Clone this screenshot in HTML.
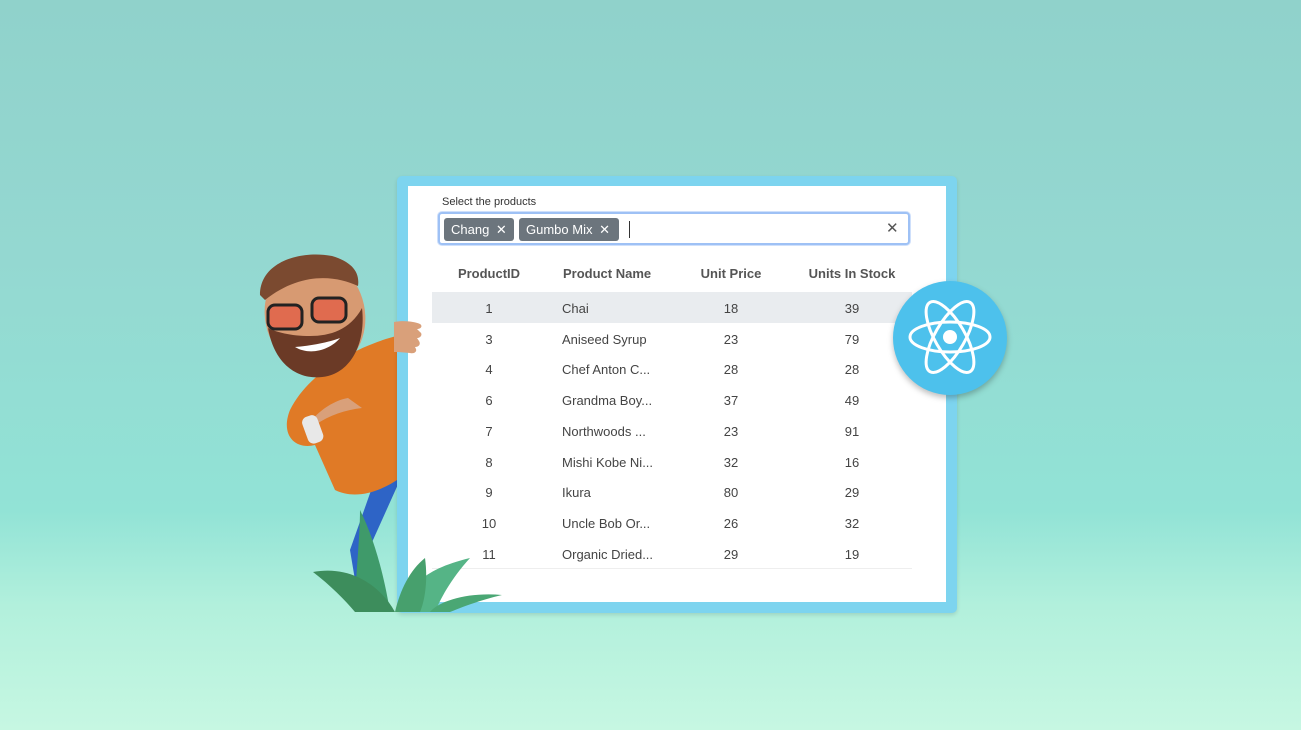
<!DOCTYPE html>
<html><head><style>
*{margin:0;padding:0;box-sizing:border-box}
body{width:1301px;height:730px;overflow:hidden;position:relative;font-family:"Liberation Sans",sans-serif;
background:linear-gradient(180deg,#90d2cb 0%,#94d8d1 35%,#92e3d6 70%,#b2f0dc 83%,#c6f7e2 100%)}
.abs{position:absolute}
.frame{left:397px;top:176px;width:560px;height:437px;background:#7dd4ef;border-radius:5px;box-shadow:0 2px 4px rgba(0,0,0,.12)}
.inner{left:408px;top:186px;width:538px;height:416px;background:#fff}
.lbl{left:442px;top:196px;font-size:11px;color:#333}
.inp{left:438px;top:212px;width:472px;height:33px;border:2px solid #9ec1f5;border-radius:4px;background:#fff;box-shadow:0 0 0 1px #cfe0fb}
.chip{top:4px;height:23px;background:#6c757d;color:#fff;font-size:13px;border-radius:3px;line-height:23px;padding-left:7px}
.t{font-size:13px;color:#444;position:absolute;transform:translateX(-50%)}
.h{font-weight:bold;color:#555}
.l{transform:none}
</style></head><body>
<svg class="abs" style="left:240px;top:250px" width="180" height="330">
<path d="M115 330 L160 230 L160 215 L140 215 L110 300 Z" fill="#2e64c6"/>
<path d="M160 85 C120 95 70 120 50 160 C40 185 55 200 75 195 L95 240 C115 250 140 242 160 228 Z" fill="#e07a26"/>
<ellipse cx="75" cy="65" rx="50" ry="58" fill="#d79a72" transform="rotate(-12 75 65)"/>
<path d="M28 78 C35 118 62 132 88 126 C112 120 126 92 122 58 C110 80 90 86 70 86 C50 86 36 82 28 78Z" fill="#6b3a26"/>
<path d="M20 45 C20 12 60 0 92 6 C112 12 120 22 118 36 C95 25 60 22 25 50Z" fill="#7b4a30"/>
<rect x="28" y="55" width="34" height="24" rx="7" fill="#e06b4f" stroke="#222" stroke-width="3"/>
<rect x="72" y="48" width="34" height="24" rx="7" fill="#e06b4f" stroke="#222" stroke-width="3"/>
<path d="M55 97 C70 106 90 100 100 88 C90 92 70 96 55 97Z" fill="#fff"/>
<path d="M75 175 C90 165 105 160 122 158 L108 148 C95 150 80 160 72 170Z" fill="#d9a07a"/>
<rect x="65" y="165" width="16" height="28" rx="6" fill="#e8e8e8" transform="rotate(-20 74 180)"/>
</svg>
<div class="abs frame"></div>
<div class="abs inner"></div>
<svg class="abs" style="left:390px;top:318px" width="35" height="40">
<path d="M4 4 C15 2 25 4 30 6 C33 8 31 11 27 11 L30 14 C33 16 31 20 27 20 L29 23 C31 26 29 29 25 29 L26 31 C27 34 24 36 20 35 L8 34 L4 34Z" fill="#d9a07a"/>
</svg>
<div class="abs lbl">Select the products</div>
<div class="abs inp">
 <div class="abs chip" style="left:4px;width:70px">Chang <span style="margin-left:3px">✕</span></div>
 <div class="abs chip" style="left:79px;width:100px">Gumbo Mix <span style="margin-left:3px">✕</span></div>
 <div class="abs" style="left:189px;top:7px;width:1px;height:17px;background:#333"></div>
 <div class="abs" style="left:446px;top:5px;font-size:15px;color:#555">✕</div>
</div>
<div class="abs" style="left:432px;top:292px;width:480px;height:31px;background:#e9ecef"></div>
<div class="abs" style="left:432px;top:568px;width:480px;height:1px;background:#eee"></div>
<div id="tb"></div>
<script>
var rows=[["ProductID","Product Name","Unit Price","Units In Stock"],["1","Chai","18","39"],["3","Aniseed Syrup","23","79"],["4","Chef Anton C...","28","28"],["6","Grandma Boy...","37","49"],["7","Northwoods ...","23","91"],["8","Mishi Kobe Ni...","32","16"],["9","Ikura","80","29"],["10","Uncle Bob Or...","26","32"],["11","Organic Dried...","29","19"]];
var h="";rows.forEach(function(r,i){var y=i==0?266:301+(i-1)*30.7;var c=i==0?" h":"";
h+='<div class="t'+c+'" style="left:489px;top:'+y+'px">'+r[0]+'</div>';
h+='<div class="t l'+c+'" style="left:'+(i==0?563:562)+'px;top:'+y+'px">'+r[1]+'</div>';
h+='<div class="t'+c+'" style="left:731px;top:'+y+'px">'+r[2]+'</div>';
h+='<div class="t'+c+'" style="left:852px;top:'+y+'px">'+r[3]+'</div>';});
document.getElementById("tb").innerHTML=h;
</script>
<svg class="abs" style="left:880px;top:270px" width="140" height="140">
<circle cx="70" cy="68" r="57" fill="#4dc1ec" style="filter:drop-shadow(0 3px 3px rgba(0,0,0,.25))"/>
<g fill="none" stroke="#fff" stroke-width="3" transform="translate(70,67)">
<ellipse rx="40" ry="15"/><ellipse rx="40" ry="15" transform="rotate(60)"/><ellipse rx="40" ry="15" transform="rotate(-60)"/></g>
<circle cx="70" cy="67" r="7" fill="#fff"/>
</svg>
<svg class="abs" style="left:310px;top:500px" width="200" height="120">
<path d="M45 112 C45 80 50 40 50 10 C65 40 75 80 80 112Z" fill="#3f9a6a"/>
<path d="M3 72 C40 65 70 85 85 112 L45 112 C35 100 20 85 3 72Z" fill="#3d8d5c"/>
<path d="M100 112 C95 90 110 70 160 58 C140 80 130 100 125 112Z" fill="#55b486"/>
<path d="M120 112 C130 100 160 92 192 95 C170 100 150 108 140 112Z" fill="#4aa774"/>
<path d="M85 112 C90 90 100 70 115 58 C118 80 115 100 110 112Z" fill="#47a06d"/>
</svg>
</body></html>
